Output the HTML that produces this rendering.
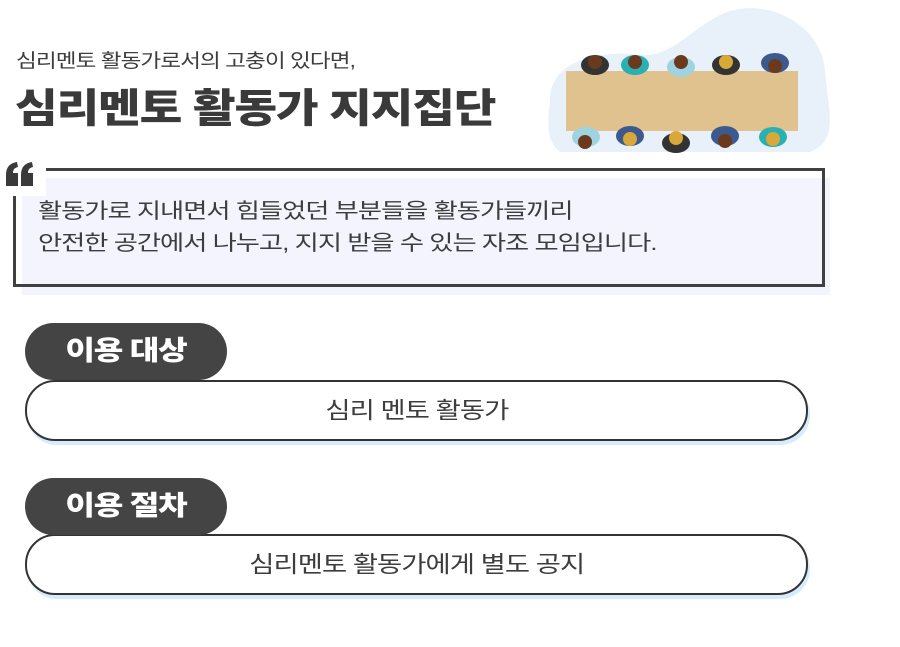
<!DOCTYPE html>
<html><head><meta charset="utf-8"><style>
body{margin:0;width:900px;height:647px;background:#fff;position:relative;overflow:hidden;font-family:"Liberation Sans","Noto Sans CJK KR",sans-serif;color:#3d3d3d}
.a{position:absolute}
.s{display:inline-block;transform:scaleX(1.19);transform-origin:left center;white-space:nowrap}
.c{display:inline-block;transform:scaleX(1.19);transform-origin:center center;white-space:nowrap}
.sub{left:16px;top:46px;font-size:19px;letter-spacing:-0.8px;white-space:nowrap}
.title{left:15px;top:76px;font-size:40px;font-weight:900;letter-spacing:-1px;white-space:nowrap;color:#3a3a3a}
.fill{left:22px;top:178px;width:808px;height:117px;background:#f3f4fd}
.frame{left:13px;top:168px;width:806px;height:113px;border:3px solid #404040}
.gap{left:0;top:160px;width:46px;height:36px;background:#fff}
.txt{left:38px;top:196px;font-size:21px;line-height:32px;letter-spacing:-0.8px;white-space:nowrap}
.pill{left:25px;width:202px;height:57px;border-radius:29px;background:#444;color:#fff;font-size:27px;font-weight:900;text-align:center;line-height:57px;letter-spacing:-1px}
.box{left:25px;width:779px;height:57px;border:2px solid #333;border-radius:30px;background:#fff;box-shadow:2px 4px 0 #d4ecfb;text-align:center;line-height:57px;font-size:23px;letter-spacing:-0.8px}
</style></head><body>
<div class="a sub"><span class="s">심리멘토 활동가로서의 고충이 있다면,</span></div>
<div class="a title"><span class="s" style="transform:scaleX(1.16)">심리멘토 활동가 지지집단</span></div>

<svg class="a" style="left:540px;top:0" width="300" height="160">
<path d="M10 100 C10 60 60 50 100 55 C130 58 150 30 180 15 C220 -5 280 20 285 70 C288 110 300 140 270 152 L20 152 C5 140 8 120 10 100Z" fill="#e8f1fa"/>
<rect x="26" y="71" width="232" height="60" fill="#dfc28e"/>
<g fill="#333"><ellipse cx="55" cy="65" rx="14" ry="10"/><ellipse cx="186" cy="65" rx="14" ry="10"/><ellipse cx="136" cy="143" rx="14" ry="10"/></g>
<g fill="#2ab0b3"><ellipse cx="95" cy="65" rx="14" ry="10"/><ellipse cx="233" cy="137" rx="14" ry="10"/></g>
<g fill="#9fd3e0"><ellipse cx="141" cy="67" rx="14" ry="10"/><ellipse cx="46" cy="137" rx="14" ry="10"/></g>
<g fill="#3d5a8f"><ellipse cx="235" cy="63" rx="14" ry="10"/><ellipse cx="90" cy="136" rx="14" ry="10"/><ellipse cx="185" cy="136" rx="14" ry="10"/></g>
<g fill="#6b3a1e"><circle cx="55" cy="62" r="7"/><circle cx="95" cy="62" r="7"/><circle cx="141" cy="62" r="7"/><circle cx="235" cy="66" r="7"/><circle cx="45" cy="142" r="7"/><circle cx="185" cy="141" r="7"/></g>
<g fill="#d8a838"><circle cx="186" cy="62" r="7"/><circle cx="90" cy="139" r="7"/><circle cx="136" cy="138" r="7"/><circle cx="233" cy="139" r="7"/></g>
</svg>

<div class="a fill"></div>
<div class="a frame"></div>
<div class="a gap"></div>
<svg class="a" style="left:5px;top:161px" width="30" height="26">
<path d="M1 25 L1 14 C1 6 5 2 12 1 L13 6 C9 7 8 9 8 12 L13 12 L13 25Z" fill="#3a3a3a"/>
<path d="M16 25 L16 14 C16 6 20 2 27 1 L28 6 C24 7 23 9 23 12 L28 12 L28 25Z" fill="#3a3a3a"/>
</svg>
<div class="a txt"><span class="s" style="transform:scaleX(1.25)">활동가로 지내면서 힘들었던 부분들을 활동가들끼리<br>안전한 공간에서 나누고, 지지 받을 수 있는 자조 모임입니다.</span></div>

<div class="a box" style="top:380px"><span class="c">심리 멘토 활동가</span></div>
<div class="a pill" style="top:323px"><span class="c">이용 대상</span></div>
<div class="a box" style="top:534px"><span class="c">심리멘토 활동가에게 별도 공지</span></div>
<div class="a pill" style="top:478px"><span class="c">이용 절차</span></div>
</body></html>
